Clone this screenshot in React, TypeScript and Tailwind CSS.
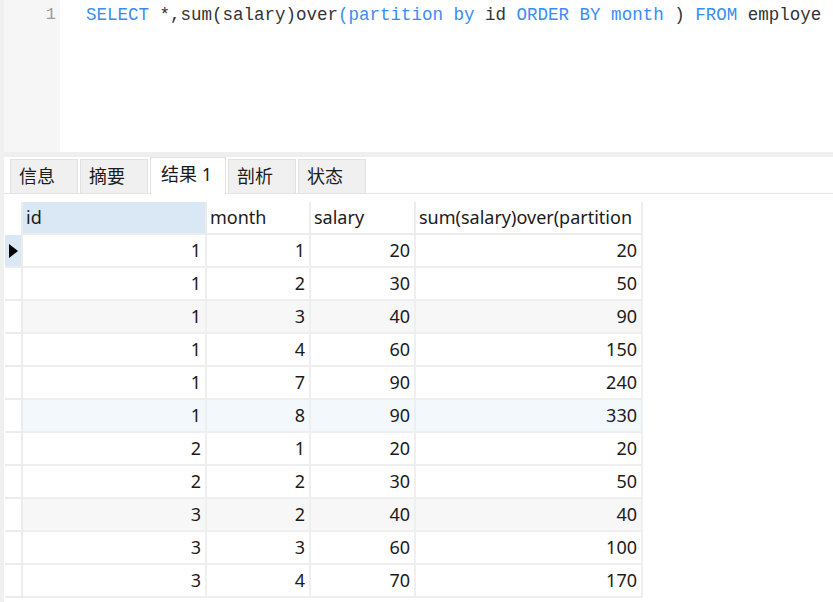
const rows = [
  [1, 1, 20, 20],
  [1, 2, 30, 50],
  [1, 3, 40, 90],
  [1, 4, 60, 150],
  [1, 7, 90, 240],
  [1, 8, 90, 330],
  [2, 1, 20, 20],
  [2, 2, 30, 50],
  [3, 2, 40, 40],
  [3, 3, 60, 100],
  [3, 4, 70, 170],
];

const tabs = [
  { label: "信息", w: "w-[68px]" },
  { label: "摘要", w: "w-[68px]" },
  { label: "结果 1", w: "w-[76px]", active: true },
  { label: "剖析", w: "w-[68px]" },
  { label: "状态", w: "w-[68px]" },
];

const cols = ["w-[184px]", "w-[104px]", "w-[105px]", "w-[227px]"];

function rowBg(i: number) {
  if (i === 5) return "bg-[#f3f8fd]";
  if (i === 2 || i === 8) return "bg-[#f7f7f7]";
  return "bg-white";
}

export default function App() {
  return (
    <div className="w-[833px] h-[602px] bg-white flex overflow-hidden font-['Noto_Sans','Noto_Sans_CJK_SC',sans-serif] text-[#1b1b1b]">
      <div className="w-[4px] bg-[#f0f0f0] shrink-0" />
      <div className="flex-1 flex flex-col">
        {/* editor */}
        <div className="h-[152px] flex">
          <div className="w-[56px] bg-[#f6f6f6] text-right pr-[4px] pt-[2px] font-['Liberation_Mono',monospace] text-[17px] text-[#9a9a9a]">
            1
          </div>
          <div className="flex-1 pl-[26px] pt-[2px] font-['Liberation_Mono',monospace] text-[17.5px] whitespace-nowrap overflow-hidden text-[#333]">
            <span className="text-[#3b8cf2]">SELECT</span> *,sum(salary)over
            <span className="text-[#3b8cf2]">(partition by</span> id{" "}
            <span className="text-[#3b8cf2]">ORDER BY month</span> ){" "}
            <span className="text-[#3b8cf2]">FROM</span> employe
          </div>
        </div>
        <div className="h-[5px] bg-[#efefef]" />

        {/* tabs */}
        <div className="h-[37px] flex items-end gap-[2px] pl-[6px] border-b border-[#e4e4e4]">
          {tabs.map((t) =>
            t.active ? (
              <div
                key={t.label}
                className={`${t.w} h-[37px] bg-white border-x border-t border-[#e2e2e2] flex items-center pl-[10px] text-[18px] -mb-px pb-[4px]`}
              >
                {t.label}
              </div>
            ) : (
              <div
                key={t.label}
                className={`${t.w} h-[34px] bg-[#f0f0f0] border-x border-t border-[#e2e2e2] flex items-center pl-[8px] text-[18px]`}
              >
                {t.label}
              </div>
            )
          )}
        </div>

        {/* grid */}
        <div className="pt-[8px] pl-[1px] flex flex-col items-start text-[18px]">
          <div className="flex h-[33px]">
            <div className="w-[18px] border-r-2 border-[#ececec]" />
            {["id", "month", "salary", "sum(salary)over(partition"].map((h, i) => (
              <div
                key={h}
                className={`${cols[i]} ${i === 0 ? "bg-[#dae8f5]" : "bg-white"} border-r-2 border-b-2 border-[#ececec] flex items-center pl-[3px] whitespace-nowrap overflow-hidden`}
              >
                {h}
              </div>
            ))}
          </div>
          {rows.map((r, ri) => (
            <div key={ri} className={`flex h-[33px] ${rowBg(ri)}`}>
              <div
                className={`w-[18px] border-r-2 border-b-2 border-[#ececec] flex items-center pl-[4px] ${
                  ri === 0 ? "bg-[#dae8f5]" : "bg-white"
                }`}
              >
                {ri === 0 && (
                  <div className="w-0 h-0 border-y-[7px] border-y-transparent border-l-[9px] border-l-black" />
                )}
              </div>
              {r.map((v, ci) => (
                <div
                  key={ci}
                  className={`${cols[ci]} border-r-2 border-b-2 border-[#efefef] flex items-center justify-end pr-[4px]`}
                >
                  {v}
                </div>
              ))}
            </div>
          ))}
        </div>
      </div>
    </div>
  );
}
